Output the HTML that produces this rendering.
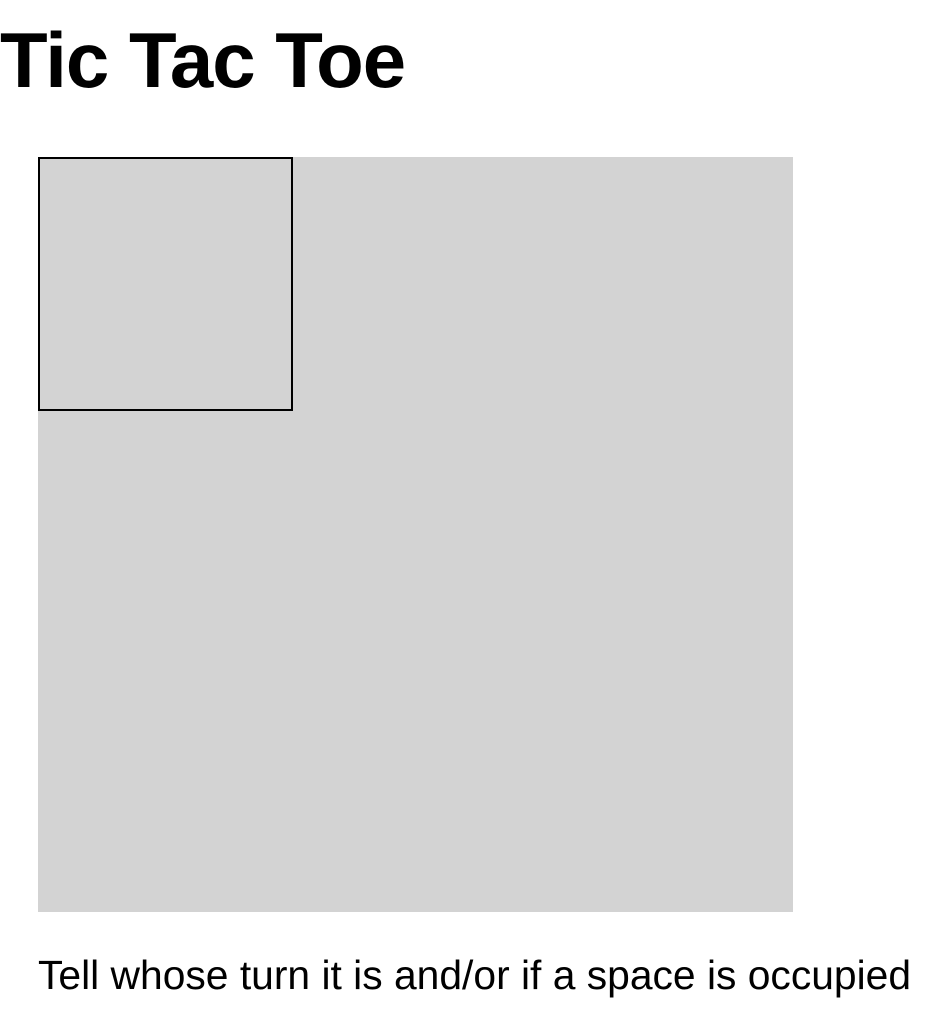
<!DOCTYPE html>
<html><head><meta charset="utf-8"><style>
html,body{margin:0;padding:0;background:#fff;width:938px;height:1010px;overflow:hidden;font-family:"Liberation Sans",sans-serif;color:#000}
h1{position:absolute;left:0;top:14px;margin:0;font-size:78px;font-weight:bold;line-height:92px;letter-spacing:-1px}
.board{position:absolute;left:38px;top:157px;width:755px;height:755px;background:#d3d3d3}
.cell{position:absolute;left:0;top:0;width:251px;height:250px;border:2px solid #000}
p{position:absolute;left:38px;top:949px;margin:0;font-size:40.8px;line-height:52px;white-space:nowrap}
</style></head><body>
<h1>Tic Tac Toe</h1>
<div class="board"><div class="cell"></div></div>
<p>Tell whose turn it is and/or if a space is occupied</p>
</body></html>
